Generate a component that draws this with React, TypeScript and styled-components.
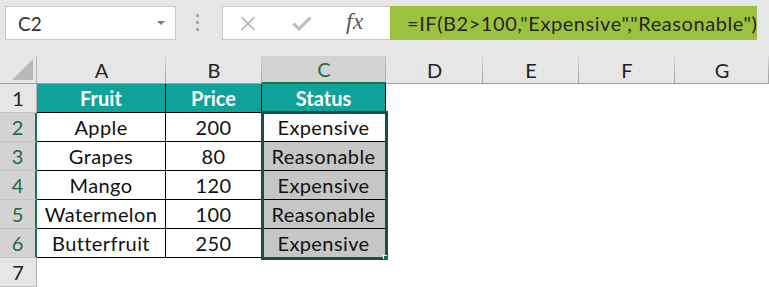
import styled, { createGlobalStyle } from 'styled-components'

const GlobalStyle = createGlobalStyle`
  html, body {
    margin: 0;
    padding: 0;
    background: #ffffff;
  }
  body {
    font-family: Lato, "Liberation Sans", sans-serif;
  }
  #root {
    width: 769px;
    height: 287px;
    overflow: hidden;
  }
`

const Sheet = styled.div`
  width: 769px;
  display: flex;
  flex-direction: column;
`

const Toolbar = styled.div`
  height: 56px;
  box-sizing: border-box;
  background: #e6e6e6;
  display: flex;
  align-items: flex-start;
  padding: 6px 0 0 5px;
`

const NameBox = styled.div`
  width: 171px;
  height: 34px;
  box-sizing: border-box;
  background: #ffffff;
  border: 1px solid #c8c8c8;
  display: flex;
  align-items: center;
  justify-content: space-between;
  padding: 0 10px 0 12px;
  font-size: 19px;
  color: #333333;
`

const DropArrow = styled.span`
  width: 0;
  height: 0;
  border-left: 4px solid transparent;
  border-right: 4px solid transparent;
  border-top: 4px solid #7a7a7a;
`

const Grip = styled.div`
  width: 3px;
  margin: 8px 23px 0 20px;
  display: flex;
  flex-direction: column;
  gap: 4px;
`

const GripDot = styled.span`
  width: 3px;
  height: 3px;
  background: #a9a9a9;
`

const FormulaTools = styled.div`
  width: 168px;
  height: 34px;
  box-sizing: border-box;
  background: #ffffff;
  border: 1px solid #c8c8c8;
  border-right: none;
  display: flex;
  align-items: center;
  padding-left: 17px;
`

const ToolIcon = styled.span<{ $gap: number }>`
  display: flex;
  margin-right: ${p => p.$gap}px;
`

const Fx = styled.span`
  font-family: "Liberation Serif", serif;
  font-style: italic;
  font-size: 23px;
  color: #555555;
  letter-spacing: 0.5px;
  margin-top: -2px;
`

const FormulaBar = styled.div`
  width: 367px;
  height: 34px;
  box-sizing: border-box;
  background: #9cc23d;
  display: flex;
  align-items: center;
  padding-left: 17px;
  font-size: 20px;
  letter-spacing: 0.55px;
  color: #262626;
  white-space: nowrap;
`

const Grid = styled.div`
  position: relative;
  display: grid;
  grid-template-columns: 37px 129px 96px 124px 97px 96px 96px 94px;
  grid-template-rows: 28px repeat(7, 29px);
`

const Corner = styled.div`
  background: #e6e6e6;
  border-right: 1px solid #b4b4b4;
  border-bottom: 1px solid #a0a0a0;
  box-sizing: border-box;
  display: flex;
  align-items: flex-end;
  justify-content: flex-end;
  padding: 0 3px 3px 0;
`

const ColHead = styled.div<{ $active?: boolean }>`
  box-sizing: border-box;
  display: flex;
  align-items: center;
  justify-content: center;
  font-size: 20px;
  color: ${p => (p.$active ? '#1f6b45' : '#222222')};
  background:
    linear-gradient(to bottom, rgba(170, 170, 170, 0.2), #a8a8a8 70%) right top / 1px 100% no-repeat,
    ${p => (p.$active ? '#d3d3d3' : '#e6e6e6')};
  border-bottom: ${p => (p.$active ? '2px solid #217346' : '1px solid #a0a0a0')};
`

const RowHead = styled.div<{ $active?: boolean }>`
  box-sizing: border-box;
  display: flex;
  align-items: center;
  justify-content: center;
  font-size: 20px;
  color: ${p => (p.$active ? '#1f6b45' : '#222222')};
  background: ${p => (p.$active ? '#d3d3d3' : '#e6e6e6')};
  border-bottom: 1px solid #c4c4c4;
  border-right: ${p => (p.$active ? '2px solid #217346' : '1px solid #b4b4b4')};
`

const Cell = styled.div<{ $head?: boolean; $shade?: boolean; $table?: boolean }>`
  box-sizing: border-box;
  display: flex;
  align-items: center;
  justify-content: center;
  font-size: 20px;
  letter-spacing: ${p => (p.$head ? 0 : 0.4)}px;
  white-space: nowrap;
  color: ${p => (p.$head ? '#ffffff' : '#111111')};
  font-weight: ${p => (p.$head ? 700 : 400)};
  background: ${p => (p.$head ? '#0fa29b' : p.$shade ? '#c6c6c6' : '#ffffff')};
  border-right: ${p => (p.$table ? '1px solid #000000' : 'none')};
  border-bottom: ${p => (p.$table ? '1px solid #000000' : 'none')};
`

const Selection = styled.div`
  position: absolute;
  left: 261px;
  top: 55px;
  width: 127px;
  height: 149px;
  box-sizing: border-box;
  border: 3px solid #174f4c;
  pointer-events: none;
`

const FillHandle = styled.div`
  position: absolute;
  right: -3px;
  bottom: -3px;
  width: 4px;
  height: 4px;
  background: #1f6b45;
  box-shadow: -1px -1px 0 #ffffff;
`

const columns = ['A', 'B', 'C', 'D', 'E', 'F', 'G']

const rows = [
  ['Apple', '200', 'Expensive'],
  ['Grapes', '80', 'Reasonable'],
  ['Mango', '120', 'Expensive'],
  ['Watermelon', '100', 'Reasonable'],
  ['Butterfruit', '250', 'Expensive'],
]

const emptyCells = (key: string, count: number) =>
  Array.from({ length: count }, (_, i) => <Cell key={`${key}-${i}`} />)

const App = () => {
  return (
    <Sheet>
      <GlobalStyle />
      <Toolbar>
        <NameBox>
          C2
          <DropArrow />
        </NameBox>
        <Grip>
          <GripDot />
          <GripDot />
          <GripDot />
        </Grip>
        <FormulaTools>
          <ToolIcon $gap={36}>
            <svg width="16" height="15" viewBox="0 0 16 15">
              <path d="M1.5 1 L14.5 14 M14.5 1 L1.5 14" stroke="#b0b0b0" strokeWidth="1.6" fill="none" />
            </svg>
          </ToolIcon>
          <ToolIcon $gap={34}>
            <svg width="20" height="15" viewBox="0 0 20 15">
              <path d="M1.5 7.5 L7 13 L18.5 1.5" stroke="#bcbcbc" strokeWidth="3" fill="none" />
            </svg>
          </ToolIcon>
          <Fx>fx</Fx>
        </FormulaTools>
        <FormulaBar>=IF(B2&gt;100,"Expensive","Reasonable")</FormulaBar>
      </Toolbar>

      <Grid>
        <Corner>
          <svg width="21" height="21" viewBox="0 0 21 21">
            <path d="M21 0 L21 21 L0 21 Z" fill="#b8b8b8" />
          </svg>
        </Corner>
        {columns.map(c => (
          <ColHead key={`col-${c}`} $active={c === 'C'}>
            {c}
          </ColHead>
        ))}

        <RowHead>1</RowHead>
        <Cell $table $head>Fruit</Cell>
        <Cell $table $head>Price</Cell>
        <Cell $table $head>Status</Cell>
        {emptyCells('r1', 4)}

        {rows.map((r, i) => [
          <RowHead key={`rh-${i}`} $active>
            {i + 2}
          </RowHead>,
          <Cell key={`a-${i}`} $table>{r[0]}</Cell>,
          <Cell key={`b-${i}`} $table>{r[1]}</Cell>,
          <Cell key={`c-${i}`} $table $shade={i > 0}>{r[2]}</Cell>,
          ...emptyCells(`r${i + 2}`, 4),
        ])}

        <RowHead>7</RowHead>
        {emptyCells('r7', 7)}

        <Selection>
          <FillHandle />
        </Selection>
      </Grid>
    </Sheet>
  )
}

export default App
